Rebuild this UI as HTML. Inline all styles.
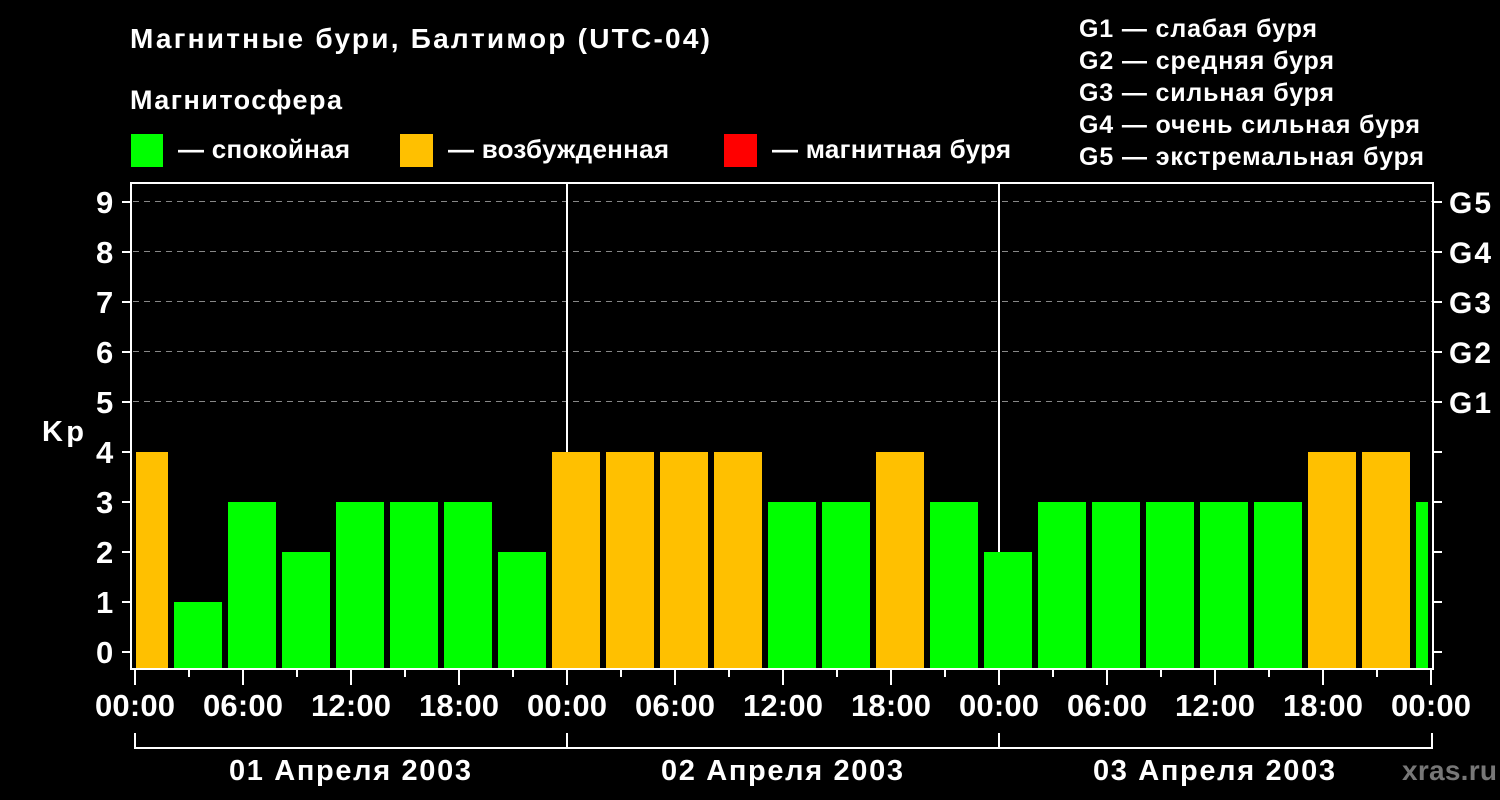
<!DOCTYPE html>
<html><head><meta charset="utf-8"><style>
html,body{margin:0;padding:0;background:#000;width:1500px;height:800px;overflow:hidden}
svg{display:block;font-family:"Liberation Sans",sans-serif;font-weight:bold}
</style></head><body>
<svg width="1500" height="800" viewBox="0 0 1500 800" xmlns="http://www.w3.org/2000/svg">
<rect width="1500" height="800" fill="#000"/>
<g fill="#fff">
<text x="130" y="48" font-size="28" textLength="580" lengthAdjust="spacing">Магнитные бури, Балтимор (UTC-04)</text>
<text x="130" y="109" font-size="27" textLength="212" lengthAdjust="spacing">Магнитосфера</text>
<text x="178" y="158" font-size="26" textLength="172" lengthAdjust="spacing">— спокойная</text>
<text x="448" y="158" font-size="26" textLength="221" lengthAdjust="spacing">— возбужденная</text>
<text x="772" y="158" font-size="26" textLength="239" lengthAdjust="spacing">— магнитная буря</text>
<text x="1079" y="37" font-size="25" textLength="238" lengthAdjust="spacing">G1 — слабая буря</text>
<text x="1079" y="69" font-size="25" textLength="255" lengthAdjust="spacing">G2 — средняя буря</text>
<text x="1079" y="101" font-size="25" textLength="255" lengthAdjust="spacing">G3 — сильная буря</text>
<text x="1079" y="133" font-size="25" textLength="341" lengthAdjust="spacing">G4 — очень сильная буря</text>
<text x="1079" y="165" font-size="25" textLength="345" lengthAdjust="spacing">G5 — экстремальная буря</text>
</g>
<rect x="131" y="134" width="32" height="33" fill="#00ff00"/>
<rect x="400" y="134" width="33" height="33" fill="#ffc000"/>
<rect x="724" y="134" width="33" height="33" fill="#ff0000"/>
<g stroke="#888" stroke-width="1" stroke-dasharray="6,5">
<line x1="133" y1="201.5" x2="1432" y2="201.5"/>
<line x1="133" y1="251.5" x2="1432" y2="251.5"/>
<line x1="133" y1="301.5" x2="1432" y2="301.5"/>
<line x1="133" y1="351.5" x2="1432" y2="351.5"/>
<line x1="133" y1="401.5" x2="1432" y2="401.5"/>
</g>
<g stroke="#fff" stroke-width="2">
<line x1="567" y1="183" x2="567" y2="668"/>
<line x1="999" y1="183" x2="999" y2="668"/>
</g>
<g id="bars"></g>
<rect x="131" y="183" width="1302" height="486" fill="none" stroke="#fff" stroke-width="2"/>
<g stroke="#fff" stroke-width="2" id="ticks"></g>
<g fill="#fff" font-size="31" id="labels"></g>
<text x="42" y="441" fill="#fff" font-size="29" textLength="42" lengthAdjust="spacing">Kp</text>
<g fill="#fff" font-size="29">
<text x="229" y="780" textLength="242" lengthAdjust="spacing">01 Апреля 2003</text>
<text x="661" y="780" textLength="242" lengthAdjust="spacing">02 Апреля 2003</text>
<text x="1093" y="780" textLength="242" lengthAdjust="spacing">03 Апреля 2003</text>
</g>
<g stroke="#fff" stroke-width="2" fill="none">
<path d="M135 733V748H1432V733M567 733V748M999 733V748"/>
</g>
<text x="1402" y="780" fill="#777" font-size="28" textLength="95" lengthAdjust="spacing">xras.ru</text>
<script>
var ns="http://www.w3.org/2000/svg";
function el(p,t,a,txt){var e=document.createElementNS(ns,t);for(var k in a)e.setAttribute(k,a[k]);if(txt)e.textContent=txt;p.appendChild(e);return e;}
var vals=[4,1,3,2,3,3,3,2,4,4,4,4,3,3,4,3,2,3,3,3,3,3,4,4,3];
var b=document.getElementById('bars');
vals.forEach(function(v,i){var l=120+54*i,r=l+48;if(l<136)l=136;if(r>1428)r=1428;var top=652-50*v;
el(b,'rect',{x:l,y:top,width:r-l,height:668-top,fill:v>=4?'#ffc000':'#00ff00'});});
var t=document.getElementById('ticks'),lb=document.getElementById('labels');
for(var k=0;k<=9;k++){var y=652-50*k;el(t,'line',{x1:122,y1:y,x2:131,y2:y});el(t,'line',{x1:1433,y1:y,x2:1442,y2:y});
el(lb,'text',{x:96,y:y+11,'font-size':31},String(k));
if(k>=5)el(lb,'text',{x:1449,y:y+11,'font-size':30,textLength:42,lengthAdjust:'spacing'},'G'+(k-4));}
var hl=['00:00','06:00','12:00','18:00'];
for(var i=0;i<=24;i++){var x=135+54*i;var maj=i%2==0;el(t,'line',{x1:x,y1:669,x2:x,y2:maj?685:677});
if(maj)el(lb,'text',{x:x-40,y:716,textLength:80,lengthAdjust:'spacing'},hl[(i/2)%4]);}
</script>
</svg>
</body></html>
